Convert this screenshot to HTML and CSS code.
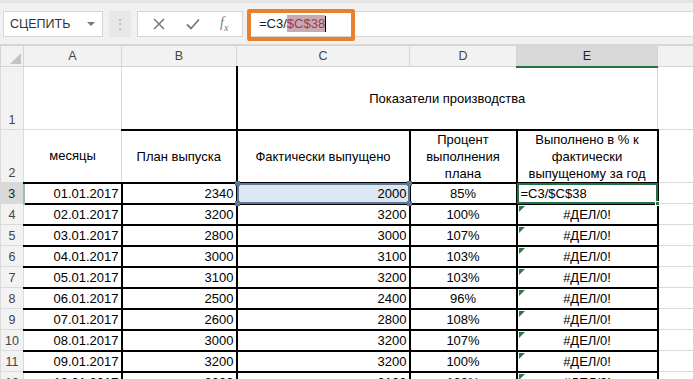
FILE: index.html
```html
<!DOCTYPE html>
<html lang="ru">

<head>
    <meta charset="UTF-8">
    <title>Показатели производства</title>
    <link rel="stylesheet" href="styles.css">
</head>

<body>
    <!-- Строка формул -->
    <div class="formula-bar">
        <div class="name-box">
            <span>СЦЕПИТЬ</span>
            <span class="name-arrow"></span>
        </div>
        <div class="grip">⋮</div>
        <div class="fx-buttons">
            <svg width="14" height="14" viewBox="0 0 14 14"><path d="M2 2L12 12M12 2L2 12" stroke="#7a7a7a" stroke-width="1.6" fill="none"/></svg>
            <svg width="16" height="14" viewBox="0 0 16 14"><path d="M2 7.5L6 11.5L14 2.5" stroke="#7a7a7a" stroke-width="1.8" fill="none"/></svg>
            <span class="fx">f<sub>x</sub></span>
        </div>
        <div class="formula-input">
            <span class="formula-text">=C3/<mark>$C$38</mark><i class="caret"></i></span>
            <span class="callout"></span>
        </div>
    </div>

    <table class="sheet">
        <colgroup>
            <col class="c-rh">
            <col class="c-a">
            <col class="c-b">
            <col class="c-c">
            <col class="c-d">
            <col class="c-e">
            <col class="c-f">
        </colgroup>
        <tr class="col-heads">
            <th class="corner"><span class="corner-tri"></span></th>
            <th>A</th>
            <th>B</th>
            <th>C</th>
            <th>D</th>
            <th class="active-col">E</th>
            <th></th>
        </tr>
        <tr class="row-1">
            <th class="rh">1</th>
            <td></td>
            <td class="bb"></td>
            <td colspan="3" class="title bl bb">Показатели производства</td>
            <td></td>
        </tr>
        <tr class="row-2">
            <th class="rh">2</th>
            <td class="head bb">месяцы</td>
            <td class="head bt bb br">План выпуска</td>
            <td class="head box">Фактически выпущено</td>
            <td class="head box">Процент<br>выполнения<br>плана</td>
            <td class="head box">Выполнено в % к<br>фактически<br>выпущеному за год</td>
            <td></td>
        </tr>
        <tr class="data">
            <th class="rh active-row">3</th>
            <td class="box num">01.01.2017</td>
            <td class="box num">2340</td>
            <td class="box num ref">2000<i class="hd tl"></i><i class="hd tr"></i><i class="hd bl2"></i><i class="hd br2"></i></td>
            <td class="box mid">85%</td>
            <td class="box edit">=C3/$C$38<i class="fill-handle"></i></td>
            <td></td>
        </tr>
        <tr class="data">
            <th class="rh">4</th>
            <td class="box num">02.01.2017</td>
            <td class="box num">3200</td>
            <td class="box num">3200</td>
            <td class="box mid">100%</td>
            <td class="box mid err">#ДЕЛ/0!</td>
            <td></td>
        </tr>
        <tr class="data">
            <th class="rh">5</th>
            <td class="box num">03.01.2017</td>
            <td class="box num">2800</td>
            <td class="box num">3000</td>
            <td class="box mid">107%</td>
            <td class="box mid err">#ДЕЛ/0!</td>
            <td></td>
        </tr>
        <tr class="data">
            <th class="rh">6</th>
            <td class="box num">04.01.2017</td>
            <td class="box num">3000</td>
            <td class="box num">3100</td>
            <td class="box mid">103%</td>
            <td class="box mid err">#ДЕЛ/0!</td>
            <td></td>
        </tr>
        <tr class="data">
            <th class="rh">7</th>
            <td class="box num">05.01.2017</td>
            <td class="box num">3100</td>
            <td class="box num">3200</td>
            <td class="box mid">103%</td>
            <td class="box mid err">#ДЕЛ/0!</td>
            <td></td>
        </tr>
        <tr class="data">
            <th class="rh">8</th>
            <td class="box num">06.01.2017</td>
            <td class="box num">2500</td>
            <td class="box num">2400</td>
            <td class="box mid">96%</td>
            <td class="box mid err">#ДЕЛ/0!</td>
            <td></td>
        </tr>
        <tr class="data">
            <th class="rh">9</th>
            <td class="box num">07.01.2017</td>
            <td class="box num">2600</td>
            <td class="box num">2800</td>
            <td class="box mid">108%</td>
            <td class="box mid err">#ДЕЛ/0!</td>
            <td></td>
        </tr>
        <tr class="data">
            <th class="rh">10</th>
            <td class="box num">08.01.2017</td>
            <td class="box num">3000</td>
            <td class="box num">3200</td>
            <td class="box mid">107%</td>
            <td class="box mid err">#ДЕЛ/0!</td>
            <td></td>
        </tr>
        <tr class="data">
            <th class="rh">11</th>
            <td class="box num">09.01.2017</td>
            <td class="box num">3200</td>
            <td class="box num">3200</td>
            <td class="box mid">100%</td>
            <td class="box mid err">#ДЕЛ/0!</td>
            <td></td>
        </tr>
        <tr class="data">
            <th class="rh">12</th>
            <td class="box num">10.01.2017</td>
            <td class="box num">3000</td>
            <td class="box num">3100</td>
            <td class="box mid">103%</td>
            <td class="box mid err">#ДЕЛ/0!</td>
            <td></td>
        </tr>
    </table>
</body>

</html>
```

FILE: styles.css
```css
* {
    margin: 0;
    padding: 0;
    box-sizing: border-box;
}

body {
    font-family: "Liberation Sans", Arial, sans-serif;
    font-size: 13px;
    color: #000;
    background: #fff;
    width: 693px;
    height: 379px;
    overflow: hidden;
}

/* Строка формул */
.formula-bar {
    height: 45px;
    background: #f1f1f1;
    border-top: 3px solid #e4e4e4;
    border-bottom: 1px solid #d9d9d9;
    display: flex;
    align-items: center;
    padding-left: 3px;
}

.name-box {
    width: 100px;
    height: 26px;
    background: #fff;
    border: 1px solid #d6d6d6;
    display: flex;
    align-items: center;
    justify-content: space-between;
    padding: 0 7px 0 6px;
    font-size: 12.5px;
    color: #333;
}

.name-arrow {
    width: 0;
    height: 0;
    border-left: 4px solid transparent;
    border-right: 4px solid transparent;
    border-top: 4px solid #777;
}

.grip {
    width: 22px;
    height: 26px;
    margin: 0 6px;
    background: #e7e7e7;
    color: #b5b5b5;
    text-align: center;
    line-height: 26px;
    font-size: 14px;
}

.fx-buttons {
    width: 106px;
    height: 26px;
    background: #fff;
    border: 1px solid #d6d6d6;
    display: flex;
    align-items: center;
    justify-content: space-around;
    padding: 0 4px;
}

.fx {
    font-family: "Liberation Serif", serif;
    font-style: italic;
    color: #777;
    font-size: 14px;
}

.fx sub {
    font-size: 10px;
}

.formula-input {
    flex: 1;
    height: 26px;
    margin-left: 4px;
    background: #fff;
    border: 1px solid #d6d6d6;
    border-right: none;
    position: relative;
    display: flex;
    align-items: center;
    padding-left: 11px;
}

.formula-text {
    font-size: 13px;
    color: #222;
    display: flex;
    align-items: center;
}

.formula-text mark {
    background: #c8abb0;
    color: #9a3a5c;
    padding: 1px 0;
}

.caret {
    display: inline-block;
    width: 1px;
    height: 16px;
    background: #000;
}

.callout {
    position: absolute;
    left: -1px;
    top: -3px;
    width: 108px;
    height: 32px;
    border: 4px solid #e8812f;
    border-radius: 2px;
}

/* Лист */
.sheet {
    border-collapse: collapse;
    table-layout: fixed;
    width: 693px;
}

.c-rh { width: 23px; }
.c-a { width: 98px; }
.c-b { width: 115px; }
.c-c { width: 173px; }
.c-d { width: 107px; }
.c-e { width: 141px; }
.c-f { width: 36px; }

.sheet td,
.sheet th {
    border: 1px solid #dadada;
    white-space: nowrap;
    overflow: hidden;
    font-weight: normal;
}

.col-heads th {
    height: 21px;
    background: #f2f2f2;
    color: #444;
    font-size: 12.5px;
    border-color: #d4d4d4;
    vertical-align: middle;
}

.col-heads .active-col {
    background: #d9d9d9;
    border-bottom: 2px solid #217346;
    color: #222;
}

.corner {
    position: relative;
}

.corner-tri {
    position: absolute;
    right: 2px;
    bottom: 2px;
    width: 0;
    height: 0;
    border-left: 11px solid transparent;
    border-bottom: 11px solid #c4c4c4;
}

.rh {
    background: #f2f2f2;
    color: #444;
    font-size: 12.5px;
    border-color: #d4d4d4;
    vertical-align: bottom;
    text-align: center;
    line-height: 18px;
}

.rh.active-row {
    background: #d9d9d9;
    color: #222;
    border-right: 2px solid #9bbfa9;
}

.row-1 td { height: 63px; }
.row-2 td { height: 51px; }
.data td {
    height: 21px;
    line-height: 18px;
    vertical-align: bottom;
    position: relative;
    overflow: visible;
}

.title {
    text-align: center;
    vertical-align: middle;
}

.head {
    text-align: center;
    vertical-align: middle;
    line-height: 17px;
}

/* Жирные рамки */
.bt { border-top: 2px solid #000 !important; }
.bb { border-bottom: 2px solid #000 !important; }
.bl { border-left: 2px solid #000 !important; }
.br { border-right: 2px solid #000 !important; }

.sheet .box {
    border: 2px solid #000;
}

.sheet .data td.box:first-of-type {
    border-left-color: #dadada;
    border-left-width: 1px;
}

.num {
    text-align: right;
    padding-right: 2px;
}

.mid {
    text-align: center;
}

.sheet .ref {
    background: #dde7f2;
    outline: 2px solid #5d7896;
    outline-offset: -2px;
}

.hd {
    position: absolute;
    width: 5px;
    height: 5px;
    background: #5d7896;
}

.hd.tl { left: -3px; top: -3px; }
.hd.tr { right: -3px; top: -3px; }
.hd.bl2 { left: -3px; bottom: -3px; }
.hd.br2 { right: -3px; bottom: -3px; }

.sheet .edit {
    padding-left: 3px;
    outline: 2px solid #217346;
    outline-offset: -2px;
}

.fill-handle {
    position: absolute;
    right: -3px;
    bottom: -3px;
    width: 5px;
    height: 5px;
    background: #217346;
    border: 1px solid #fff;
}

.err::before {
    content: "";
    position: absolute;
    left: 1px;
    top: 1px;
    width: 0;
    height: 0;
    border-top: 6px solid #2a7a45;
    border-right: 6px solid transparent;
}
```
